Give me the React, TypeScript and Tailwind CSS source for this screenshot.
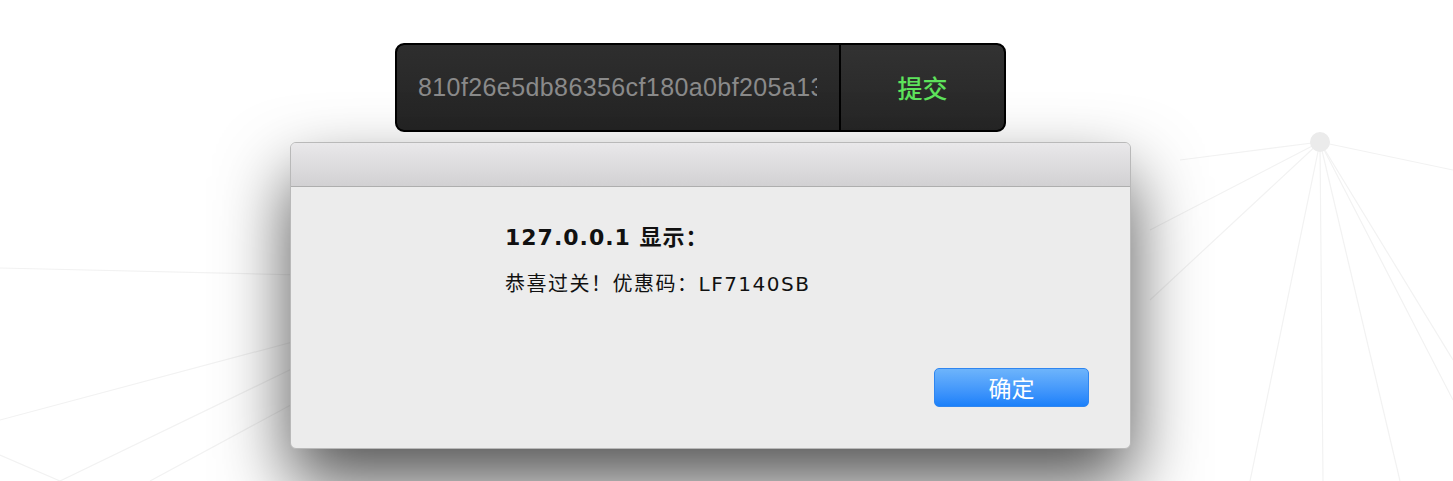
export default function App() {
  const node = { x: 1320, y: 142 };
  const spokes: [number, number][] = [
    [1180, 160],
    [1150, 230],
    [1150, 300],
    [1250, 481],
    [1323, 481],
    [1400, 481],
    [1453, 400],
    [1453, 360],
    [1453, 170],
  ];

  return (
    <div className="relative h-[481px] w-full overflow-hidden bg-white font-['DejaVu_Sans','Noto_Sans_CJK_SC',sans-serif]">
      {/* faint particle network behind */}
      <svg className="absolute inset-0 h-full w-full" viewBox="0 0 1453 481">
        <g stroke="#f2f2f2" strokeWidth="1.2" fill="none">
          {spokes.map(([x, y], i) => (
            <line key={i} x1={node.x} y1={node.y} x2={x} y2={y} />
          ))}
          <line x1="0" y1="268" x2="300" y2="275" />
          <line x1="0" y1="420" x2="300" y2="340" />
          <line x1="60" y1="481" x2="300" y2="365" />
          <line x1="150" y1="481" x2="300" y2="400" />
          <line x1="0" y1="455" x2="60" y2="481" />
        </g>
        <circle cx={node.x} cy={node.y} r="10" fill="#ebebeb" />
      </svg>

      <div className="relative flex flex-col">
        {/* hash input + submit */}
        <div className="ml-[395px] mt-[43px] flex h-[89px] w-[611px] overflow-hidden rounded-[9px] border-2 border-black bg-black">
          <div className="flex w-[442px] items-center rounded-l-[7px] bg-gradient-to-b from-[#2e2e2e] to-[#242424] pl-[21px] pr-[22px]">
            <div className="flex-1 overflow-hidden">
              <span className="whitespace-nowrap font-['Liberation_Sans',sans-serif] text-[25px] tracking-[0.4px] text-[#8a8a8a]">
                810f26e5db86356cf180a0bf205a13c4
              </span>
            </div>
          </div>
          <div className="ml-[2px] flex flex-1 items-center justify-center rounded-r-[7px] bg-gradient-to-b from-[#323232] to-[#262626]">
            <span className="font-['Noto_Sans_CJK_SC',sans-serif] text-[25px] font-medium text-[#5ee35c]">提交</span>
          </div>
        </div>

        {/* alert dialog */}
        <div className="ml-[290px] mt-[10px] flex h-[307px] w-[841px] flex-col overflow-hidden rounded-[6px] border border-[#b9b9b9] bg-[#ececec] shadow-[0_34px_70px_rgba(0,0,0,0.68)]">
          <div className="h-[44px] shrink-0 border-b border-[#aeaeae] bg-gradient-to-b from-[#e9e8ea] to-[#d2d1d3]" />
          <div className="flex flex-1 flex-col pl-[214px] pr-[41px] pt-[35px]">
            <p className="text-[22px] font-bold leading-[32px] tracking-[1px] text-[#111]">
              127.0.0.1 显示：
            </p>
            <p className="mt-[17px] text-[20px] leading-[26px] tracking-[1.5px] text-[#111]">
              恭喜过关！优惠码：LF7140SB
            </p>
            <div className="mt-auto mb-[41px] flex justify-end">
              <button className="flex h-[39px] w-[155px] items-center justify-center rounded-[5px] border border-[#2f86f0] bg-gradient-to-b from-[#6db4fb] to-[#1a80fa] font-['Noto_Sans_CJK_SC',sans-serif] text-[23px] text-white">
                确定
              </button>
            </div>
          </div>
        </div>
      </div>
    </div>
  );
}
